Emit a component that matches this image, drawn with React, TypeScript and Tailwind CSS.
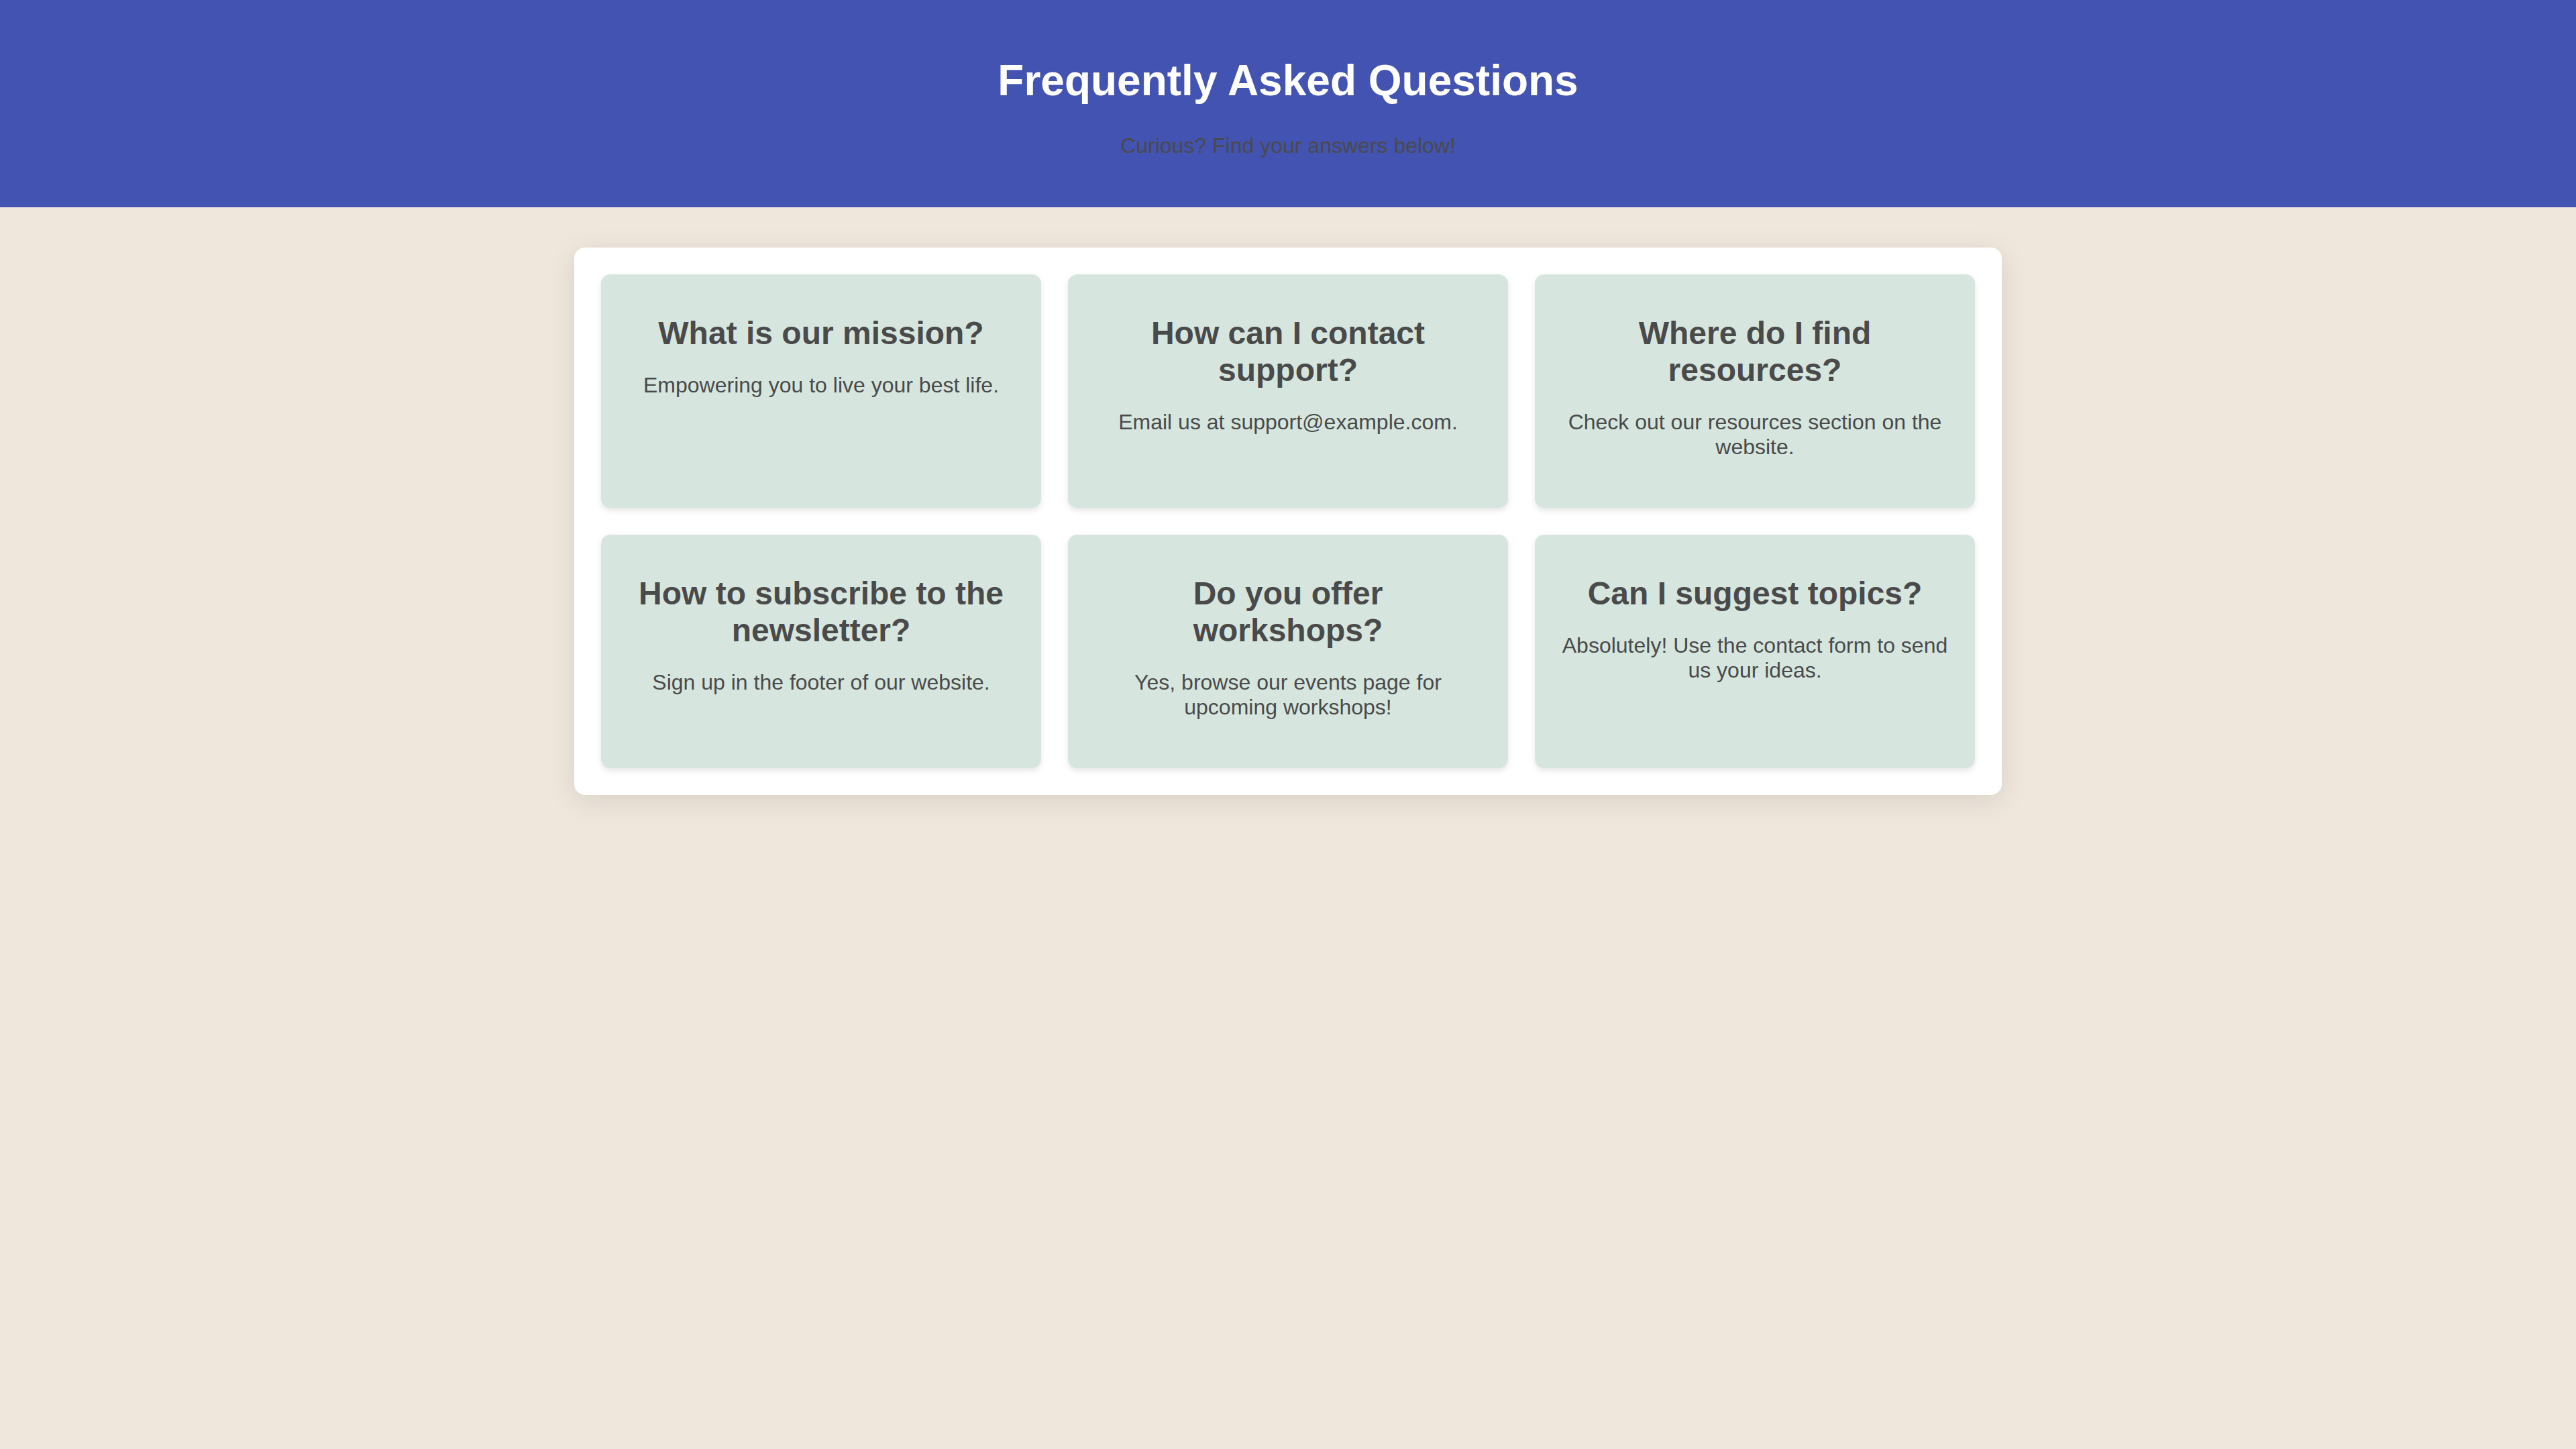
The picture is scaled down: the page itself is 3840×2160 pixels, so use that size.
const faqs = [
  {
    q: "What is our mission?",
    a: "Empowering you to live your best life.",
  },
  {
    q: "How can I contact support?",
    a: "Email us at support@example.com.",
  },
  {
    q: "Where do I find resources?",
    a: "Check out our resources section on the website.",
  },
  {
    q: "How to subscribe to the newsletter?",
    a: "Sign up in the footer of our website.",
  },
  {
    q: "Do you offer workshops?",
    a: "Yes, browse our events page for upcoming workshops!",
  },
  {
    q: "Can I suggest topics?",
    a: "Absolutely! Use the contact form to send us your ideas.",
  },
]

export default function App() {
  return (
    <div className="min-h-screen bg-[#efe7dc] font-['Liberation_Sans',Arial,sans-serif] text-[#4a4a4a]">
      {/* Header */}
      <header className="bg-[#4353b1] pt-[83px] pb-[73px] text-center">
        <h1 className="text-[64px] leading-[74px] font-bold text-white">Frequently Asked Questions</h1>
        <p className="mt-[42px] text-[32px] leading-[37px] text-[#4a4a4a]">Curious? Find your answers below!</p>
      </header>

      {/* FAQ grid */}
      <main className="mx-auto mt-[60px] w-[2128px] rounded-[16px] bg-white p-[40px] shadow-[0_8px_40px_rgba(0,0,0,0.1)]">
        <div className="grid grid-cols-3 gap-[40px]">
          {faqs.map((item) => (
            <div
              key={item.q}
              className="rounded-[14px] bg-[#d6e6df] px-[40px] pt-[60px] pb-[72px] text-center shadow-[0_4px_10px_rgba(0,0,0,0.1)]"
            >
              <h3 className="text-[48px] leading-[55px] font-bold">{item.q}</h3>
              <p className="mt-[32px] text-[32px] leading-[37px]">{item.a}</p>
            </div>
          ))}
        </div>
      </main>
    </div>
  )
}
